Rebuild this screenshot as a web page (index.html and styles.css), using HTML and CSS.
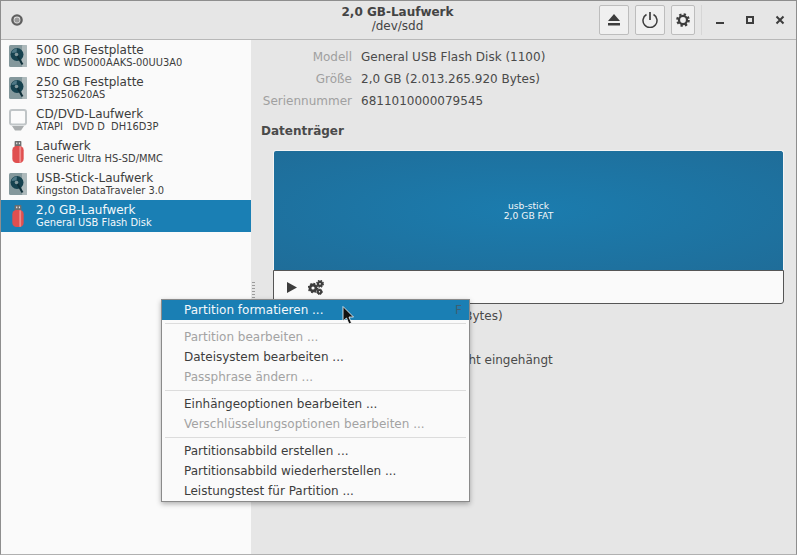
FILE: index.html
```html
<!DOCTYPE html>
<html lang="de">
<head>
<meta charset="utf-8">
<title>2,0 GB-Laufwerk</title>
<link rel="stylesheet" href="styles.css">
</head>
<body>
<svg class="defs" width="0" height="0">
  <defs>
    <symbol id="hdd" viewBox="0 0 18 22">
      <rect x="0" y="0" width="18" height="22" rx="1.5" fill="#84989c"/>
      <rect x="13" y="0" width="5" height="22" rx="1" fill="#adb9bb"/>
      <circle cx="8" cy="9.500" r="6.500" fill="#16424f"/>
      <path d="M2.500 8 A6 6 0 0 1 8 3.500 L7.500 7.500 Z" fill="#4f7886"/>
      <circle cx="7.500" cy="9.500" r="1.800" fill="#84989c"/>
      <path d="M8.500 11 L13.500 19.500" stroke="#10303a" stroke-width="2" fill="none"/>
    </symbol>
    <symbol id="usb" viewBox="0 0 14 26">
      <rect x="3" y="0" width="8" height="7" rx="1" fill="#6d6d6d"/>
      <rect x="4.800" y="1.800" width="1.400" height="2" fill="#e8e8e8"/>
      <rect x="8" y="1.800" width="1.400" height="2" fill="#e8e8e8"/>
      <rect x="0.300" y="6" width="13.400" height="20" rx="5" fill="#e04f4f"/>
      <rect x="8.500" y="6.300" width="2.200" height="19.400" fill="#ee8a8a"/>
    </symbol>
    <symbol id="cd" viewBox="0 0 18 22">
      <rect x="1" y="1" width="16" height="14.500" rx="2" fill="#fbfbfb" stroke="#c0c5c7" stroke-width="2"/>
      <path d="M3 17 H15 L12 21.500 H6 Z" fill="#a9adae"/>
    </symbol>
    <symbol id="gear" viewBox="0 0 16 16">
      <circle cx="8" cy="8" r="4.600" fill="none" stroke="#3d3d3d" stroke-width="2.600"/>
      <circle cx="8" cy="8" r="6.500" fill="none" stroke="#3d3d3d" stroke-width="2.600" stroke-dasharray="2.600 2.500"/>
    </symbol>
  </defs>
</svg>
<div class="window">
  <header class="titlebar">
    <svg class="app-dot" width="12" height="12" viewBox="0 0 12 12"><circle cx="6" cy="6" r="4.600" fill="none" stroke="#5f5f5f" stroke-width="2.400"/><circle cx="6" cy="6" r="2.600" fill="#9a9a9a"/></svg>
    <div class="title">
      <div class="title-main">2,0 GB-Laufwerk</div>
      <div class="title-sub">/dev/sdd</div>
    </div>
    <div class="tools">
      <button class="tool tool-wide"><svg width="12" height="12" viewBox="0 0 12 12"><path d="M6 0 L12 7 H0 Z M0 9 H12 V11.500 H0 Z" fill="#3d3d3d"/></svg></button>
      <button class="tool tool-wide"><svg width="16" height="16" viewBox="0 0 16 16"><path d="M4.500 2.500 A7 7 0 1 0 11.500 2.500" fill="none" stroke="#3d3d3d" stroke-width="1.500"/><path d="M8 0 V8" stroke="#3d3d3d" stroke-width="1.700"/></svg></button>
      <button class="tool tool-narrow"><svg width="14" height="14"><use href="#gear"/></svg></button>
    </div>
    <div class="sep"></div>
    <div class="wm">
      <svg width="10" height="10" viewBox="0 0 10 10"><rect x="1" y="7" width="8" height="2" fill="#3d3d3d"/></svg>
      <svg width="10" height="10" viewBox="0 0 10 10"><rect x="2" y="2" width="6" height="6" fill="none" stroke="#3d3d3d" stroke-width="2"/></svg>
      <svg width="10" height="10" viewBox="0 0 10 10"><path d="M1.500 1.500 L8.500 8.500 M8.500 1.500 L1.500 8.500" stroke="#3d3d3d" stroke-width="2"/></svg>
    </div>
  </header>
  <div class="body">
    <aside class="sidebar">
      <div class="drive"><svg class="ico" width="18" height="22"><use href="#hdd"/></svg><div><div class="d-name">500 GB Festplatte</div><div class="d-sub">WDC WD5000AAKS-00UU3A0</div></div></div>
      <div class="drive"><svg class="ico" width="18" height="22"><use href="#hdd"/></svg><div><div class="d-name">250 GB Festplatte</div><div class="d-sub">ST3250620AS</div></div></div>
      <div class="drive"><svg class="ico" width="18" height="22"><use href="#cd"/></svg><div><div class="d-name">CD/DVD-Laufwerk</div><div class="d-sub">ATAPI&nbsp;&nbsp; DVD D&nbsp; DH16D3P</div></div></div>
      <div class="drive"><svg class="ico" width="18" height="22"><use href="#usb"/></svg><div><div class="d-name">Laufwerk</div><div class="d-sub">Generic Ultra HS-SD/MMC</div></div></div>
      <div class="drive"><svg class="ico" width="18" height="22"><use href="#hdd"/></svg><div><div class="d-name">USB-Stick-Laufwerk</div><div class="d-sub">Kingston DataTraveler 3.0</div></div></div>
      <div class="drive selected"><svg class="ico" width="18" height="22"><use href="#usb"/></svg><div><div class="d-name">2,0 GB-Laufwerk</div><div class="d-sub">General USB Flash Disk</div></div></div>
    </aside>
    <main class="main">
      <dl class="props">
        <dt>Modell</dt><dd>General USB Flash Disk (1100)</dd>
        <dt>Größe</dt><dd>2,0 GB (2.013.265.920 Bytes)</dd>
        <dt>Seriennummer</dt><dd>6811010000079545</dd>
      </dl>
      <h2 class="section">Datenträger</h2>
      <div class="volumes">
        <div class="partition"><div>usb-stick</div><div>2,0 GB FAT</div></div>
        <div class="vol-tools">
          <svg width="10" height="11" viewBox="0 0 10 11"><path d="M0 0 L10 5.500 L0 11 Z" fill="#3d3d3d"/></svg>
          <svg width="16" height="15" viewBox="0 0 16 15"><g fill="none" stroke="#3d3d3d"><circle cx="5" cy="8" r="3" stroke-width="2.800"/><circle cx="5" cy="8" r="4.600" stroke-width="1.400" stroke-dasharray="1.800 1.800"/><circle cx="12" cy="3.800" r="2" stroke-width="2.200"/><circle cx="12" cy="3.800" r="3.400" stroke-width="1.200" stroke-dasharray="1.500 1.200"/><circle cx="11.500" cy="11.800" r="1.700" stroke-width="2"/><circle cx="11.500" cy="11.800" r="2.800" stroke-width="1" stroke-dasharray="1.300 1"/></g></svg>
        </div>
      </div>
      <dl class="props props-lower">
        <dt>Größe</dt><dd class="size-value">(2.013.265.920 Bytes)</dd>
        <dt>Inhalt</dt><dd>FAT (32-bit) — Nicht eingehängt</dd>
      </dl>
    </main>
  </div>
</div>

<div class="grip"></div>

<nav class="menu">
  <div class="item active">Partition formatieren ...<span class="accel">F</span></div>
  <hr>
  <div class="item off">Partition bearbeiten ...</div>
  <div class="item">Dateisystem bearbeiten ...</div>
  <div class="item off">Passphrase ändern ...</div>
  <hr>
  <div class="item">Einhängeoptionen bearbeiten ...</div>
  <div class="item off">Verschlüsselungsoptionen bearbeiten ...</div>
  <hr>
  <div class="item">Partitionsabbild erstellen ...</div>
  <div class="item">Partitionsabbild wiederherstellen ...</div>
  <div class="item">Leistungstest für Partition ...</div>
</nav>

<svg class="cursor" width="14" height="20" viewBox="0 0 14 20"><path d="M1 0.500 V15 L4.500 12 L7 18 L9.500 17 L7 11 H11.500 Z" fill="#111" stroke="#fff" stroke-width="0.800"/></svg>
</body>
</html>
```

FILE: styles.css
```css
* { box-sizing: border-box; }
html, body { margin: 0; padding: 0; height: 555px; overflow: hidden; }
body { font-family: "DejaVu Sans", sans-serif; font-size: 12px; color: #3d3d3d; background: #9a9a9a; position: relative; }
.defs { position: absolute; }
.window { width: 797px; height: 555px; display: flex; flex-direction: column; border: 1px solid #8e8e8e; border-bottom-color: #b0b0b0; background: #e6e6e6; }
.titlebar { height: 39px; flex: none; display: flex; align-items: center; background: #e6e6e6; border-bottom: 1px solid #b8b8b8; position: relative; }
.app-dot { margin-left: 10px; }
.title { position: absolute; left: 0; right: 2px; top: 4px; text-align: center; line-height: 14px; pointer-events: none; }
.title-main { font-weight: bold; font-size: 12px; color: #444; }
.title-sub { font-size: 12px; color: #444; }
.tools { margin-left: auto; display: flex; gap: 6px; }
.tool { height: 30px; padding: 0; display: flex; align-items: center; justify-content: center; background: #f0f0f0; border: 1px solid #bdbdbd; border-radius: 2px; }
.tool-wide { width: 30px; }
.tool-narrow { width: 24px; }
.sep { width: 1px; height: 30px; background: #d6d6d6; margin-left: 6px; }
.wm { display: flex; gap: 20px; margin-left: 13px; margin-right: 11px; }
.body { flex: 1; display: flex; min-height: 0; }
.sidebar { width: 250px; flex: none; background: #fafafa; }
.drive { height: 32px; display: flex; align-items: center; color: #3d3d3d; }
.ico { width: 18px; margin-left: 8px; margin-right: 9px; flex: none; }
.d-name { font-size: 12px; line-height: 14px; }
.d-sub { font-size: 9.900px; line-height: 12px; }
.selected { background: #1a7fb4; color: #f4f8fb; }
.main { flex: 1; padding: 6px 12px 0 10px; min-width: 0; }
.props { margin: 0; display: grid; grid-template-columns: 91px 1fr; column-gap: 9px; row-gap: 0; line-height: 22px; }
.props dt { text-align: right; color: #a0a0a0; }
.props dd { margin: 0; color: #4a4a4a; }
.props dd.size-value { padding-left: 7px; }
.section { margin: 8px 0 0; font-size: 12px; font-weight: bold; line-height: 22px; color: #4a4a4a; }
.volumes { margin: 8px 0 0 12px; }
.partition { height: 120px; background: radial-gradient(ellipse at center, #1b7cae 0%, #1f6d99 100%); border: 1px solid #f4f4f4; border-bottom: 0; border-radius: 3px 3px 0 0; color: #f2f6f9; font-size: 9.200px; line-height: 10px; text-align: center; padding-top: 50px; }
.vol-tools { height: 34px; background: #fafafa; border: 1px solid #555; border-radius: 0 0 3px 3px; display: flex; align-items: center; gap: 11px; padding-left: 13px; }
.props-lower { margin-top: 1px; row-gap: 22px; }
.grip { position: absolute; left: 252px; top: 282px; width: 3px; height: 16px; background: repeating-linear-gradient(to bottom, #9c9c9c 0 1px, transparent 1px 3px); }
.menu { position: absolute; left: 161px; top: 299px; width: 309px; height: 203px; background: #fafafa; border: 1px solid #8a8a8a; box-shadow: 0 2px 5px rgba(0,0,0,.3); }
.item { height: 20px; line-height: 20px; padding-left: 22px; color: #3d3d3d; position: relative; }
.item.active { background: #1a7fb4; color: #f4f8fb; }
.item.off { color: #a3a3a3; }
.accel { position: absolute; right: 7px; color: #3f5f72; }
.menu hr { border: 0; height: 1px; background: #dcdcdc; margin: 3px 3px 3px 3px; }
.cursor { position: absolute; left: 342px; top: 306px; }
```
